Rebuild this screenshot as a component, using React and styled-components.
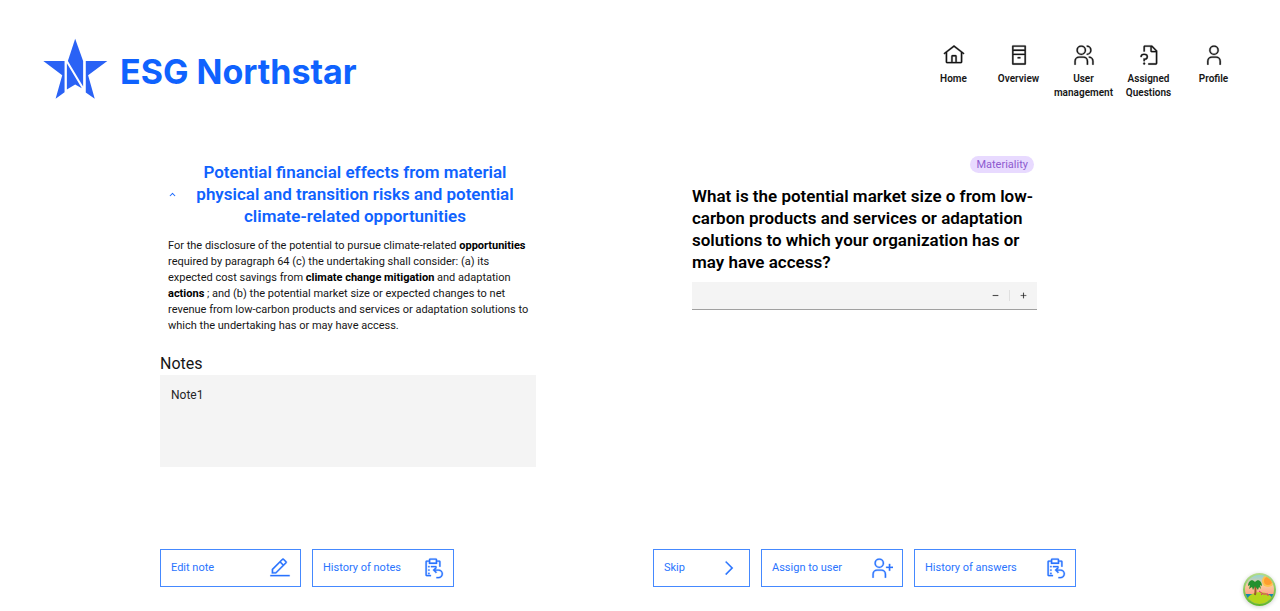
import React, { useState } from 'react';
import styled, { createGlobalStyle } from 'styled-components';

const GlobalStyle = createGlobalStyle`
  *, *::before, *::after { box-sizing: border-box; }
  body {
    margin: 0;
    background: #ffffff;
    color: #161616;
    font-family: Roboto, "Liberation Sans", sans-serif;
    font-size: 11px;
    line-height: 16px;
  }
  button, input, textarea { font: inherit; color: inherit; border-radius: 0; }
`;

const blue = '#0f62fe';

const Header = styled.header`
  display: flex;
  justify-content: space-between;
  align-items: flex-start;
  padding: 38px 34px 0 43px;
`;

const Brand = styled.a`
  display: flex;
  align-items: flex-end;
  gap: 12px;
  color: ${blue};
  text-decoration: none;
`;

const BrandName = styled.span`
  font: 700 34px/56px Inter, sans-serif;
`;

const Nav = styled.nav`
  display: flex;
  margin-top: 6px;
`;

const NavLink = styled.a`
  display: flex;
  flex-direction: column;
  align-items: center;
  gap: 6px;
  width: 65px;
  color: #161616;
  font-size: 10px;
  font-weight: 600;
  line-height: 14px;
  text-align: center;
  text-decoration: none;
`;

const Main = styled.main`
  display: grid;
  grid-template-columns: 378fr 422fr;
  column-gap: 117px;
  row-gap: 82px;
  padding: 56px 204px 24px 160px;
`;

const Guidance = styled.section`
  padding-top: 5px;
`;

const Toggle = styled.button`
  display: flex;
  align-items: center;
  width: 100%;
  gap: 5px;
  padding: 0 8px;
  border: 0;
  background: none;
  color: ${blue};
  cursor: pointer;
`;

const Topic = styled.span`
  flex: 1;
  font-size: 17px;
  font-weight: 600;
  line-height: 22px;
  text-align: center;
`;

const Disclosure = styled.p`
  margin: 11px 6px 19px 8px;

  b { color: #000000; }
`;

const NotesLabel = styled.label`
  display: block;
  font-size: 16px;
  line-height: 22px;
`;

const NotesBox = styled.textarea`
  display: block;
  width: 100%;
  height: 92px;
  padding: 12px 11px;
  border: 0;
  background: #f4f4f4;
  color: #262626;
  font-size: 12px;
  resize: none;
`;

const Question = styled.section`
  display: flex;
  flex-direction: column;
  padding: 0 39px;
`;

const Tag = styled.span`
  align-self: flex-end;
  margin-right: 3px;
  padding: 0 6px;
  border-radius: 9px;
  background: #e8daff;
  color: #8e5bcf;
  line-height: 17px;
`;

const QuestionText = styled.label`
  margin: 12px 0 9px;
  color: #000000;
  font-size: 17px;
  font-weight: 600;
  line-height: 22px;
`;

const NumberField = styled.div`
  display: flex;
  align-items: center;
  height: 28px;
  border-bottom: 1px solid #a0a0a0;
  background: #f4f4f4;
`;

const NumberInput = styled.input`
  flex: 1;
  min-width: 0;
  height: 100%;
  padding: 0 11px;
  border: 0;
  background: transparent;
  appearance: textfield;

  &::-webkit-inner-spin-button { appearance: none; margin: 0; }
`;

const StepButton = styled.button`
  display: flex;
  align-items: center;
  justify-content: center;
  width: 27px;
  height: 100%;
  padding: 0;
  border: 0;
  background: none;
  cursor: pointer;
`;

const Divider = styled.span`
  width: 1px;
  height: 11px;
  background: #e0e0e0;
`;

const Actions = styled.div`
  display: flex;
  gap: 11px;
`;

const ActionButton = styled.button`
  display: flex;
  align-items: center;
  justify-content: space-between;
  width: ${(p) => p.$width}px;
  height: 38px;
  padding: 0 9px 0 10px;
  border: 1px solid #4589ff;
  background: #ffffff;
  color: #2a74fe;
  cursor: pointer;
`;

const HelpBadge = styled.button`
  position: fixed;
  right: 4px;
  bottom: 5px;
  width: 33px;
  height: 33px;
  padding: 0;
  border: 0;
  border-radius: 50%;
  background: none;
  box-shadow: 0 1px 4px rgba(0, 0, 0, 0.2);
  cursor: pointer;

  svg { display: block; }
`;

const Icon = ({ size = 22, children }) => (
  <svg
    width={size}
    height={size}
    viewBox="0 0 32 32"
    fill="currentColor"
    stroke="currentColor"
    strokeWidth="0.4"
    aria-hidden="true"
  >
    {children}
  </svg>
);

const HomeIcon = () => (
  <Icon>
    <path d="M16.6 2.2a1 1 0 0 0-1.2 0L1 13.4 2.2 15 4 13.6V26a2 2 0 0 0 2 2h20a2 2 0 0 0 2-2V13.6L29.8 15 31 13.4ZM18 26h-4v-8h4Zm2 0v-8a2 2 0 0 0-2-2h-4a2 2 0 0 0-2 2v8H6V12.1l10-7.8 10 7.8V26Z" />
  </Icon>
);

const OverviewIcon = () => (
  <Icon>
    <path d="M25 2H7a1 1 0 0 0-1 1v26a1 1 0 0 0 1 1h18a1 1 0 0 0 1-1V3a1 1 0 0 0-1-1Zm-1 2v4H8V4Zm0 6v4H8v-4ZM8 28V16h16v12Z" />
    <path d="M14 19h4v2h-4z" />
  </Icon>
);

const UsersIcon = () => (
  <Icon>
    <path d="M30 30h-2v-5a5 5 0 0 0-5-5v-2a7 7 0 0 1 7 7zM22 30h-2v-5a5 5 0 0 0-5-5H9a5 5 0 0 0-5 5v5H2v-5a7 7 0 0 1 7-7h6a7 7 0 0 1 7 7zM20 2v2a5 5 0 0 1 0 10v2a7 7 0 0 0 0-14zM12 4a5 5 0 1 1-5 5 5 5 0 0 1 5-5m0-2a7 7 0 1 0 7 7 7 7 0 0 0-7-7z" />
  </Icon>
);

const UnknownDocumentIcon = () => (
  <Icon>
    <circle cx="9" cy="28.5" r="1.5" />
    <path d="M10 25H8v-4h2a2.5 2.5 0 0 0 0-5H8a2.5 2.5 0 0 0-2.5 2.5V19h-2v-.5A4.5 4.5 0 0 1 8 14h2a4.5 4.5 0 0 1 0 9Z" />
    <path d="m27.7 9.3-7-7A1 1 0 0 0 20 2H10a2 2 0 0 0-2 2v7h2V4h8v6a2 2 0 0 0 2 2h6v16H15v2h11a2 2 0 0 0 2-2V10a1 1 0 0 0-.3-.7ZM20 4.4l5.6 5.6H20Z" />
  </Icon>
);

const UserIcon = () => (
  <Icon>
    <path d="M16 4a5 5 0 1 1-5 5 5 5 0 0 1 5-5m0-2a7 7 0 1 0 7 7 7 7 0 0 0-7-7zM26 30h-2v-5a5 5 0 0 0-5-5h-6a5 5 0 0 0-5 5v5H6v-5a7 7 0 0 1 7-7h6a7 7 0 0 1 7 7z" />
  </Icon>
);

const EditIcon = () => (
  <Icon>
    <path d="M2 26h28v2H2zM25.4 9c.8-.8.8-2 0-2.8l-3.6-3.6c-.8-.8-2-.8-2.8 0l-15 15V24h6.4l15-15zM20.4 4 24 7.6l-3 3L17.4 7l3-3zM6 22v-3.6l10-10 3.6 3.6-10 10H6z" />
  </Icon>
);

const HistoryIcon = () => (
  <Icon>
    <path d="M25 5h-3V4a2 2 0 0 0-2-2h-8a2 2 0 0 0-2 2v1H7a2 2 0 0 0-2 2v19a2 2 0 0 0 2 2h6v-2H7V7h3v3h12V7h3v7h2V7a2 2 0 0 0-2-2Zm-5 3h-8V4h8Z" />
    <path d="M9 13h2v2H9zM13 13h8v2h-8zM9 18h2v2H9zM9 23h2v2H9z" />
    <path d="M24 18h-4.5l2.2-2.2-1.4-1.4L15.6 19l4.7 4.6 1.4-1.4L19.5 20H24a4.5 4.5 0 0 1 0 9h-3v2h3a6.5 6.5 0 0 0 0-13Z" />
  </Icon>
);

const ChevronRightIcon = () => (
  <Icon>
    <path d="M22 16 12 26l-1.4-1.4 8.6-8.6-8.6-8.6L12 6z" />
  </Icon>
);

const AssignIcon = () => (
  <Icon>
    <path d="M32 14h-4v-4h-2v4h-4v2h4v4h2v-4h4zM12 4a5 5 0 1 1-5 5 5 5 0 0 1 5-5m0-2a7 7 0 1 0 7 7 7 7 0 0 0-7-7zM22 30h-2v-5a5 5 0 0 0-5-5H9a5 5 0 0 0-5 5v5H2v-5a7 7 0 0 1 7-7h6a7 7 0 0 1 7 7z" />
  </Icon>
);

const ChevronUpIcon = () => (
  <Icon size={9}>
    <path d="m16 10 10 10-2 2-8-8-8 8-2-2z" />
  </Icon>
);

const MinusIcon = () => (
  <Icon size={11}>
    <path d="M8 15h16v2H8z" />
  </Icon>
);

const PlusIcon = () => (
  <Icon size={11}>
    <path d="M17 15V8h-2v7H8v2h7v7h2v-7h7v-2z" />
  </Icon>
);

const StarLogo = () => (
  <svg width="65" height="62" viewBox="40 38 196 186" fill="#2a62f5" aria-hidden="true">
    <path d="M137 40 161 107V184L115 107Z" />
    <path d="M112 114 157 189 137 178 112 193Z" />
    <path d="M41 107H105V201L78 221 98 150Z" />
    <path d="M169 107H234L176 150 196 221 169 202Z" />
  </svg>
);

const IslandArt = () => (
  <svg width="33" height="33" viewBox="0 0 33 33" aria-hidden="true">
    <defs>
      <linearGradient id="sky" x1="0" y1="0" x2="0" y2="1">
        <stop offset="0" stopColor="#7fd6dc" />
        <stop offset="0.4" stopColor="#fbc79a" />
        <stop offset="0.7" stopColor="#ff9c86" />
      </linearGradient>
      <linearGradient id="rim" x1="0" y1="0" x2="0" y2="1">
        <stop offset="0" stopColor="#b4dc8c" />
        <stop offset="1" stopColor="#5fb52c" />
      </linearGradient>
      <clipPath id="disc"><circle cx="16.5" cy="16.5" r="14.5" /></clipPath>
    </defs>
    <circle cx="16.5" cy="16.5" r="16.5" fill="url(#rim)" />
    <g clipPath="url(#disc)">
      <path fill="url(#sky)" d="M0 0h33v33H0z" />
      <circle cx="25" cy="8" r="6" fill="#ffc24d" />
      <circle cx="25" cy="8" r="4" fill="#ff9d2e" />
      <path fill="#168aa8" d="M0 21h33v12H0z" />
      <ellipse cx="17" cy="28" rx="13" ry="9" fill="#b5d51c" />
      <path d="M12 22c1-5 1-8-1-12" fill="none" stroke="#9b5a2a" strokeWidth="2" />
      <path fill="#23902f" d="M12 9C9 5 5 8 5 13l2-1-1 4 3-2 1 3 2-4 3 4 1-3 2 2-1-4 2 1c0-5-4-8-7-4Z" />
      <path d="m16 18 4 3h5m-7 1 2-2m5 1v2" fill="none" stroke="#e0316c" strokeWidth="1" />
    </g>
  </svg>
);

const navItems = [
  ['Home', HomeIcon],
  ['Overview', OverviewIcon],
  ['User management', UsersIcon],
  ['Assigned Questions', UnknownDocumentIcon],
  ['Profile', UserIcon],
];

const noteActions = [
  ['Edit note', EditIcon, 141],
  ['History of notes', HistoryIcon, 142],
];

const answerActions = [
  ['Skip', ChevronRightIcon, 97],
  ['Assign to user', AssignIcon, 142],
  ['History of answers', HistoryIcon, 162],
];

const ActionBar = ({ items }) => (
  <Actions>
    {items.map(([label, Glyph, width]) => (
      <ActionButton key={label} type="button" $width={width}>
        {label}
        <Glyph />
      </ActionButton>
    ))}
  </Actions>
);

export default function App() {
  const [open, setOpen] = useState(true);
  const [note, setNote] = useState('Note1');
  const [answer, setAnswer] = useState('');
  const step = (delta) => setAnswer(String(Number(answer) + delta));

  return (
    <>
      <GlobalStyle />
      <Header>
        <Brand href="#home">
          <StarLogo />
          <BrandName>ESG Northstar</BrandName>
        </Brand>
        <Nav>
          {navItems.map(([label, Glyph]) => (
            <NavLink key={label} href="#">
              <Glyph />
              {label}
            </NavLink>
          ))}
        </Nav>
      </Header>
      <Main>
        <Guidance>
          <Toggle type="button" aria-expanded={open} onClick={() => setOpen(!open)}>
            <ChevronUpIcon />
            <Topic>
              Potential financial effects from material physical and transition risks and
              potential climate-related opportunities
            </Topic>
          </Toggle>
          {open && (
            <Disclosure>
              For the disclosure of the potential to pursue climate-related <b>opportunities</b>{' '}
              required by paragraph 64 (c) the undertaking shall consider: (a) its expected cost
              savings from <b>climate change mitigation</b> and adaptation <b>actions</b> ; and (b)
              the potential market size or expected changes to net revenue from low-carbon products
              and services or adaptation solutions to which the undertaking has or may have access.
            </Disclosure>
          )}
          <NotesLabel htmlFor="notes">Notes</NotesLabel>
          <NotesBox id="notes" value={note} onChange={(e) => setNote(e.target.value)} />
        </Guidance>
        <Question>
          <Tag>Materiality</Tag>
          <QuestionText htmlFor="answer">
            What is the potential market size o from low-carbon products and services or adaptation
            solutions to which your organization has or may have access?
          </QuestionText>
          <NumberField>
            <NumberInput
              id="answer"
              type="number"
              value={answer}
              onChange={(e) => setAnswer(e.target.value)}
            />
            <StepButton type="button" aria-label="Decrease" onClick={() => step(-1)}>
              <MinusIcon />
            </StepButton>
            <Divider />
            <StepButton type="button" aria-label="Increase" onClick={() => step(1)}>
              <PlusIcon />
            </StepButton>
          </NumberField>
        </Question>
        <ActionBar items={noteActions} />
        <ActionBar items={answerActions} />
      </Main>
      <HelpBadge type="button" aria-label="Help">
        <IslandArt />
      </HelpBadge>
    </>
  );
}
